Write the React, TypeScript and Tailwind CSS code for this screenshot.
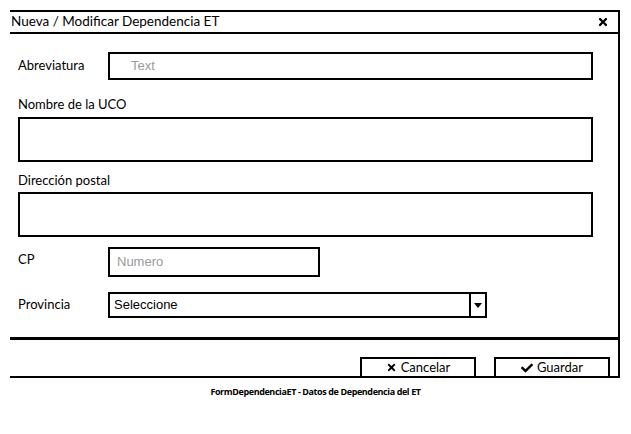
import React from "react";
import { FaTimes, FaCheck } from "react-icons/fa";

export default function App() {
  const hand = { fontFamily: "Lato, 'Open Sans', sans-serif" };
  const arial = { fontFamily: "'Liberation Sans', Arial, sans-serif" };
  return (
    <div className="w-[631px] h-[434px] bg-white text-black" style={hand}>
      <div className="ml-[10px] pt-[10px] w-[610px]">
        <div className="border-t-2 border-r-2 border-b-2 border-black h-[368px] flex flex-col">
          <div className="h-[22px] shrink-0 border-b-2 border-black flex items-center justify-between pl-[1px] pr-[9px]">
            <span className="text-[13.5px] leading-none">Nueva / Modificar Dependencia ET</span>
            <FaTimes className="w-[12px] h-[12px]" />
          </div>
          <div className="h-[303px] shrink-0 flex flex-col pl-[8px] pr-[25px]">
            <div className="mt-[18px] h-[28px] flex items-center">
              <span className="w-[90px] text-[13px]">Abreviatura</span>
              <div className="flex-1 h-full border-2 border-black flex items-center pl-[21px]">
                <span className="text-[13px] text-[#9a9a9a]" style={arial}>Text</span>
              </div>
            </div>
            <div className="mt-[16px] h-[16px] text-[13px] leading-[16px]">Nombre de la UCO</div>
            <div className="mt-[5px] h-[45px] border-2 border-black" />
            <div className="mt-[10px] h-[16px] text-[13px] leading-[16px]">Dirección postal</div>
            <div className="mt-[4px] h-[45px] border-2 border-black" />
            <div className="mt-[10px] h-[30px] flex items-center">
              <span className="w-[90px] text-[13px] -mt-[4px]">CP</span>
              <div className="w-[212px] h-full border-2 border-black flex items-center pl-[7px]">
                <span className="text-[13px] text-[#9a9a9a]" style={arial}>Numero</span>
              </div>
            </div>
            <div className="mt-[15px] h-[26px] flex items-center">
              <span className="w-[90px] text-[13px]">Provincia</span>
              <div className="w-[379px] h-full border-2 border-black flex items-center">
                <span className="flex-1 pl-[4px] text-[13px]" style={arial}>Seleccione</span>
                <div className="w-[16px] h-full border-l-2 border-black flex items-center justify-center">
                  <svg width="8" height="5" viewBox="0 0 8 5"><path d="M0 0 L8 0 L4 5 Z" fill="#000" /></svg>
                </div>
              </div>
            </div>
          </div>
          <div className="flex-1 border-t-[3px] border-black flex items-end justify-end gap-[18px] pr-[8px]">
            <div className="w-[116px] h-[19px] border-t-2 border-x-2 border-black flex items-center justify-center gap-[4px] text-[13px]">
              <FaTimes className="w-[11px] h-[11px]" />
              <span>Cancelar</span>
            </div>
            <div className="w-[116px] h-[19px] border-t-2 border-x-2 border-black flex items-center justify-center gap-[4px] text-[13px]">
              <FaCheck className="w-[12px] h-[12px]" />
              <span>Guardar</span>
            </div>
          </div>
        </div>
      </div>
      <div className="mt-[8px] text-center text-[9px] font-bold leading-[12px] tracking-[-0.4px]" style={{ fontFamily: "'Open Sans', sans-serif" }}>
        FormDependenciaET - Datos de Dependencia del ET
      </div>
    </div>
  );
}
